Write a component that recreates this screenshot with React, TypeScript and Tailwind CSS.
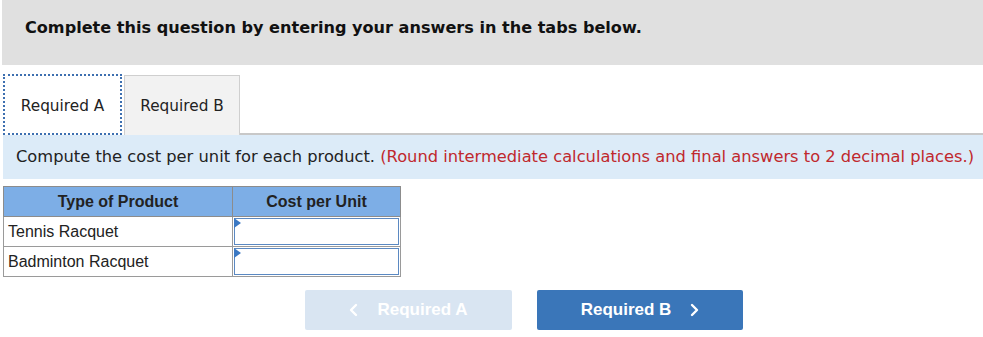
import React from 'react';

const products = ['Tennis Racquet', 'Badminton Racquet'];

function Chevron({ dir }: { dir: 'left' | 'right' }) {
  return (
    <svg width="9" height="14" viewBox="0 0 9 14" fill="none" stroke="currentColor" strokeWidth="2.4" strokeLinecap="round" strokeLinejoin="round">
      {dir === 'left' ? <path d="M7 2 L2 7 L7 12" /> : <path d="M2 2 L7 7 L2 12" />}
    </svg>
  );
}

function CostInput() {
  return (
    <div className="relative h-full p-px">
      <input
        type="text"
        aria-label="Cost per unit"
        className="block h-[27px] w-full border border-[#5b89c2] bg-white outline-none"
      />
      <span className="absolute left-[1px] top-[1px] h-0 w-0 border-y-[5px] border-l-[7px] border-y-transparent border-l-[#3b78c3]" />
    </div>
  );
}

export default function App() {
  return (
    <div className="h-[337px] w-[983px] bg-white font-['DejaVu_Sans',Verdana,sans-serif]">
      <div className="ml-[2px] flex h-[65px] items-center bg-[#e0e0e0] pl-[23px] pb-[8px]">
        <h2 className="text-[16.1px] font-bold text-[#111]">
          Complete this question by entering your answers in the tabs below.
        </h2>
      </div>

      {/* tabs */}
      <div className="mt-[9px] ml-[3px] flex h-[61px] items-stretch">
        <button className="w-[119px] border-2 border-dotted border-[#3d6fb0] bg-white pt-[3px] text-[15.3px] text-[#222]">
          Required A
        </button>
        <button className="ml-[2px] mt-[1px] w-[116px] border border-b-0 border-[#cfcfcf] bg-[#f2f2f2] pt-[2px] text-[15.3px] text-[#222]">
          Required B
        </button>
        <div className="flex-1 border-b-2 border-[#c8c8c8]" />
      </div>

      <div className="ml-[3px] flex h-[44px] items-center bg-[#dcebf8] pl-[13px] text-[16.3px] text-[#222]">
        <p className="whitespace-nowrap">
          Compute the cost per unit for each product.{' '}
          <span className="text-[#c0282d]">
            (Round intermediate calculations and final answers to 2 decimal places.)
          </span>
        </p>
      </div>

      <table className="mt-[7px] ml-[3px] w-[398px] border-collapse font-['Liberation_Sans',Arial,sans-serif] text-[16px] text-[#222]">
        <thead>
          <tr>
            <th className="h-[30px] w-[229px] border border-[#8c8c8c] bg-[#7daee6] p-0 font-bold">Type of Product</th>
            <th className="h-[30px] border border-[#8c8c8c] bg-[#7daee6] p-0 font-bold">Cost per Unit</th>
          </tr>
        </thead>
        <tbody>
          {products.map((p) => (
            <tr key={p}>
              <td className="h-[30px] border border-[#9a9a9a] py-0 pl-[4px] text-left font-normal">{p}</td>
              <td className="h-[30px] border border-[#9a9a9a] p-0">
                <CostInput />
              </td>
            </tr>
          ))}
        </tbody>
      </table>

      <div className="mt-[13px] ml-[305px] flex gap-[25px] font-['Liberation_Sans',Arial,sans-serif] text-[17px] font-bold text-white">
        <button
          disabled
          className="flex h-[40px] w-[207px] items-center justify-center gap-[19px] rounded-[2px] bg-[#d9e5f2]"
        >
          <Chevron dir="left" />
          Required A
        </button>
        <button className="flex h-[40px] w-[206px] items-center justify-center gap-[19px] rounded-[2px] bg-[#3a76b9]">
          Required B
          <Chevron dir="right" />
        </button>
      </div>
    </div>
  );
}
